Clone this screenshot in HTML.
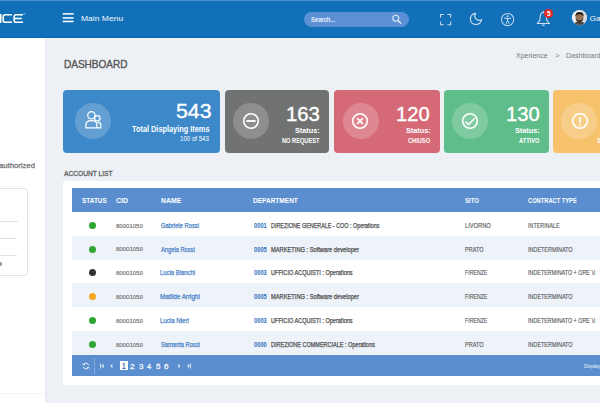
<!DOCTYPE html>
<html><head><meta charset="utf-8">
<style>
*{margin:0;padding:0;box-sizing:border-box}
html,body{width:600px;height:403px;overflow:hidden;background:#edf0f4;font-family:"Liberation Sans",sans-serif;position:relative}
.t{position:absolute;white-space:nowrap;line-height:1;transform-origin:0 0}
</style></head><body>
<div style="position:absolute;left:0;top:0;width:600px;height:38px;background:#1270b9"></div>
<div style="position:absolute;left:0;top:37px;width:600px;height:1px;background:#0b67b6"></div>
<div style="position:absolute;left:0;top:0;width:600px;height:1px;background:#4a92d2"></div>
<div style="position:absolute;left:0;top:38px;width:45px;height:365px;background:#fff"></div>
<div style="position:absolute;left:45px;top:38px;width:2px;height:365px;background:linear-gradient(90deg,#e4ebf6,#edf0f4)"></div>

<svg style="position:absolute;left:0;top:12px" width="30" height="14" viewBox="0 0 30 14">
 <rect x="0" y="2" width="1.5" height="9" fill="#fff"/>
 <path d="M12 2.8 H5.2 Q3.2 2.8 3.2 4.8 V8.2 Q3.2 10.2 5.2 10.2 H12" fill="none" stroke="#fff" stroke-width="1.6"/>
 <path d="M23 2.8 H16 Q14.2 2.8 14.2 4.6 V8.4 Q14.2 10.2 16 10.2 H23 M14.9 6.5 H21.8" fill="none" stroke="#fff" stroke-width="1.6"/>
 <circle cx="24.5" cy="1.6" r="0.8" fill="none" stroke="#cfe0f2" stroke-width="0.4"/>
</svg>
<svg style="position:absolute;left:62px;top:12px" width="13" height="11" viewBox="0 0 13 11">
 <rect x="0.7" y="1.1" width="11" height="1.5" fill="#fff"/>
 <rect x="0.7" y="5.2" width="11" height="1.5" fill="#fff"/>
 <rect x="0.7" y="8.7" width="11" height="1.5" fill="#fff"/>
</svg>

<div style="position:absolute;left:304px;top:12.3px;width:105px;height:14.5px;border-radius:8px;background:#5b90d4"></div>
<svg style="position:absolute;left:390px;top:13px" width="14" height="13" viewBox="0 0 14 13">
 <circle cx="5.8" cy="5.2" r="3.0" fill="none" stroke="#dae6f5" stroke-width="1.1"/>
 <path d="M8 7.5 L10.8 10.2" stroke="#dae6f5" stroke-width="1.5" stroke-linecap="round"/>
</svg>
<svg style="position:absolute;left:439px;top:13px" width="14" height="14" viewBox="0 0 14 14">
 <path d="M1.5 4.8 V1.5 H4.8 M8.4 1.5 H11.7 V4.8 M11.7 8.4 V11.7 H8.4 M4.8 11.7 H1.5 V8.4" fill="none" stroke="#c3d7ee" stroke-width="1.05"/>
</svg>
<svg style="position:absolute;left:469px;top:12px" width="15" height="15" viewBox="0 0 15 15">
 <path d="M6.55 1.32 A5.6 5.6 0 1 0 12.54 7.7 A4.5 4.5 0 0 1 6.55 1.32 Z" fill="none" stroke="#d3e2f3" stroke-width="1.2" stroke-linejoin="round"/>
</svg>
<svg style="position:absolute;left:500px;top:12px" width="15" height="15" viewBox="0 0 15 15">
 <circle cx="7.6" cy="7.5" r="6.1" fill="none" stroke="#c2d8ef" stroke-width="1.05"/>
 <circle cx="7.6" cy="4.3" r="0.95" fill="#d3e2f3"/>
 <path d="M4.5 6.1 L7.6 6.8 L10.7 6.1 M7.6 6.8 V8.8 L6.1 11.4 M7.6 8.8 L9.1 11.4" fill="none" stroke="#d3e2f3" stroke-width="1" stroke-linecap="round" stroke-linejoin="round"/>
</svg>
<svg style="position:absolute;left:536px;top:10px" width="16" height="17" viewBox="0 0 16 17">
 <path d="M7.3 2.4 C5.2 2.4 4.4 4.4 4.2 6.8 L3.8 10.4 L1.2 13.5 H13.4 L10.8 10.4 L10.4 6.8 C10.2 4.4 9.4 2.4 7.3 2.4 Z" fill="none" stroke="#d3e2f3" stroke-width="1.05" stroke-linejoin="round"/>
 <circle cx="7.3" cy="1.6" r="0.7" fill="#d3e2f3"/>
 <path d="M6.1 14.6 Q7.3 16 8.5 14.6" fill="none" stroke="#d3e2f3" stroke-width="1.05"/>
</svg>
<div style="position:absolute;left:544.3px;top:9.1px;width:8.7px;height:8.7px;border-radius:50%;background:#e52a2a"></div>
<svg style="position:absolute;left:571px;top:10px" width="17" height="16" viewBox="0 0 17 16">
 <defs><clipPath id="av"><circle cx="8.4" cy="7.6" r="7.5"/></clipPath></defs>
 <circle cx="8.4" cy="7.6" r="7.6" fill="#f0f0f0"/>
 <g clip-path="url(#av)">
  <rect x="11" y="0" width="6" height="16" fill="#d9d9d9"/>
  <path d="M1.5 16 Q2.5 11.8 8.4 11.4 Q14.3 11.8 15.3 16 Z" fill="#4e4a46"/>
  <ellipse cx="8.5" cy="7.4" rx="3.9" ry="4.6" fill="#9c7257"/>
  <path d="M4.4 6.8 Q4 2 8.5 2 Q13 2 12.6 6.8 Q11.8 4.2 8.5 4.3 Q5.2 4.2 4.4 6.8 Z" fill="#231d1a"/>
  <path d="M4.7 8.2 Q5 12.2 8.5 12.2 Q12 12.2 12.3 8.2 Q11.2 10.4 8.5 10.4 Q5.8 10.4 4.7 8.2Z" fill="#3a2d26"/>
 </g>
</svg>
<div style="position:absolute;left:-10px;top:188px;width:38px;height:87.5px;border:1px solid #e4e4e4;border-radius:4px"></div>
<div style="position:absolute;left:0;top:220.6px;width:18px;height:1px;background:#e2e2e2"></div>
<div style="position:absolute;left:0;top:238px;width:17px;height:1px;background:#e2e2e2"></div>
<div style="position:absolute;left:0;top:255px;width:17px;height:1px;background:#e2e2e2"></div>
<div style="position:absolute;left:0;top:392.5px;width:45px;height:1px;background:#f3f3f3"></div>
<div style="position:absolute;left:-1px;top:262px;width:3px;height:4px;border-radius:1.5px;background:#9a9a9a"></div>

<div style="position:absolute;left:63px;top:90px;width:157px;height:62.8px;border-radius:4px;background:#3d88c9"></div>
<div style="position:absolute;left:224.5px;top:90px;width:104.7px;height:62.8px;border-radius:4px;background:#717373"></div>
<div style="position:absolute;left:334px;top:90px;width:105.6px;height:62.8px;border-radius:4px;background:#d66976"></div>
<div style="position:absolute;left:443.8px;top:90px;width:104.8px;height:62.8px;border-radius:4px;background:#5fbd8a"></div>
<div style="position:absolute;left:553px;top:90px;width:105.5px;height:62.8px;border-radius:4px;background:#f6c26c"></div>
<div style="position:absolute;left:75.00px;top:103px;width:36px;height:36px;border-radius:50%;background:rgba(255,255,255,.2)"></div>
<div style="position:absolute;left:232.90px;top:103px;width:36px;height:36px;border-radius:50%;background:rgba(255,255,255,.2)"></div>
<div style="position:absolute;left:342.60px;top:103px;width:36px;height:36px;border-radius:50%;background:rgba(255,255,255,.2)"></div>
<div style="position:absolute;left:452.00px;top:103px;width:36px;height:36px;border-radius:50%;background:rgba(255,255,255,.2)"></div>
<div style="position:absolute;left:561.20px;top:103px;width:36px;height:36px;border-radius:50%;background:rgba(255,255,255,.2)"></div>
<svg style="position:absolute;left:75px;top:103px" width="36" height="36" viewBox="0 0 36 36">
 <circle cx="16.4" cy="12.2" r="3.7" fill="none" stroke="#fff" stroke-width="1.25"/>
 <path d="M10.9 24.8 V21.6 Q10.9 17.5 16.4 17.5 Q21.9 17.5 21.9 21.6 V24.8 Z" fill="none" stroke="#fff" stroke-width="1.25" stroke-linejoin="round"/>
 <circle cx="22.3" cy="15.3" r="2.7" fill="none" stroke="#fff" stroke-width="1.2"/>
 <path d="M21.9 24.8 H25.8 V22.2 Q25.8 19.3 22.6 19.2" fill="none" stroke="#fff" stroke-width="1.2" stroke-linejoin="round"/>
</svg>
<svg style="position:absolute;left:232.90px;top:103px" width="36" height="36" viewBox="0 0 36 36"><circle cx="18" cy="18" r="7.3" fill="none" stroke="#fff" stroke-width="1.6"/><path d="M13.4 18 H22.6" stroke="#fff" stroke-width="1.9"/></svg>
<svg style="position:absolute;left:342.40px;top:103px" width="36" height="36" viewBox="0 0 36 36"><circle cx="18" cy="18" r="7.3" fill="none" stroke="#fff" stroke-width="1.6"/><path d="M15.1 15.1 L20.9 20.9 M20.9 15.1 L15.1 20.9" stroke="#fff" stroke-width="1.5"/></svg>
<svg style="position:absolute;left:452.20px;top:103px" width="36" height="36" viewBox="0 0 36 36"><circle cx="18" cy="18" r="7.3" fill="none" stroke="#fff" stroke-width="1.6"/><path d="M13.9 19.2 L16.6 21.6 L22.4 15.5" fill="none" stroke="#fff" stroke-width="1.6" stroke-linecap="round" stroke-linejoin="round"/></svg>
<svg style="position:absolute;left:561.90px;top:103px" width="36" height="36" viewBox="0 0 36 36"><circle cx="18" cy="18" r="7.3" fill="none" stroke="#fff" stroke-width="1.6"/><path d="M18 13.9 V20.5" stroke="#fff" stroke-width="1.6"/><circle cx="18" cy="22.6" r="0.95" fill="#fff"/></svg>
<div style="position:absolute;left:63px;top:180.7px;width:560px;height:204.6px;border-radius:3px;background:#fff"></div>
<div style="position:absolute;left:72px;top:188px;width:540px;height:24px;background:#5a8ecf"></div>
<div style="position:absolute;left:88.7px;top:221.70px;width:7px;height:7px;border-radius:50%;background:#2ea636"></div>
<div style="position:absolute;left:72px;top:235.80px;width:540px;height:23.80px;background:#eef2f9"></div>
<div style="position:absolute;left:88.7px;top:245.50px;width:7px;height:7px;border-radius:50%;background:#2ea636"></div>
<div style="position:absolute;left:88.7px;top:269.30px;width:7px;height:7px;border-radius:50%;background:#333333"></div>
<div style="position:absolute;left:72px;top:283.40px;width:540px;height:23.80px;background:#eef2f9"></div>
<div style="position:absolute;left:88.7px;top:293.10px;width:7px;height:7px;border-radius:50%;background:#f5a623"></div>
<div style="position:absolute;left:88.7px;top:316.90px;width:7px;height:7px;border-radius:50%;background:#2ea636"></div>
<div style="position:absolute;left:72px;top:331.00px;width:540px;height:23.80px;background:#eef2f9"></div>
<div style="position:absolute;left:88.7px;top:340.70px;width:7px;height:7px;border-radius:50%;background:#2ea636"></div>
<div style="position:absolute;left:72px;top:354.8px;width:540px;height:20.8px;background:#5a8ecf"></div>
<svg style="position:absolute;left:81.6px;top:361.8px" width="8" height="8" viewBox="0 0 8 8">
 <path d="M6.6 3.2 A2.7 2.7 0 0 0 1.5 2.6 M1.4 4.8 A2.7 2.7 0 0 0 6.5 5.4" fill="none" stroke="#eaf1fa" stroke-width="1"/>
 <path d="M0.6 1.4 L1.5 3 L3.1 2.2 M7.4 6.6 L6.5 5 L4.9 5.8" fill="none" stroke="#eaf1fa" stroke-width="0.9"/>
</svg>
<div style="position:absolute;left:93.5px;top:357.5px;width:1px;height:16px;background:#84a9da"></div>
<svg style="position:absolute;left:99px;top:362px" width="100" height="8" viewBox="0 0 100 8">
 <rect x="1.2" y="1.5" width="0.9" height="5" fill="#eaf1fa"/>
 <path d="M4.6 1.8 L2.6 4 L4.6 6.2 Z" fill="#eaf1fa"/>
 <path d="M13.4 1.8 L11.4 4 L13.4 6.2 Z" fill="#eaf1fa"/>
 <path d="M79.4 1.8 L81.4 4 L79.4 6.2 Z" fill="#eaf1fa"/>
 <path d="M88.8 1.8 L90.8 4 L88.8 6.2 Z" fill="#eaf1fa"/>
 <rect x="91.2" y="1.5" width="0.9" height="5" fill="#eaf1fa"/>
</svg>
<div style="position:absolute;left:119.8px;top:361.3px;width:8.7px;height:8.7px;background:#fff"></div>
<div class="t" style="left:80.62px;top:15.00px;font-size:8.116px;font-weight:normal;color:#f4f8fc;transform:scaleX(1.050);">Main Menu</div>
<div class="t" style="left:310.90px;top:16.00px;font-size:8.116px;font-weight:normal;color:#eef4fb;transform:scaleX(0.744);-webkit-text-stroke:0.2px #eef4fb">Search...</div>
<div class="t" style="left:546.91px;top:10.00px;font-size:7.000px;font-weight:bold;color:#fff;transform:scaleX(0.914);">5</div>
<div class="t" style="left:589.80px;top:15.00px;font-size:7.971px;font-weight:normal;color:#f4f8fc;transform:scaleX(1.000);">Ga</div>
<div class="t" style="left:-0.61px;top:162.00px;font-size:8.014px;font-weight:normal;color:#6e6e6e;transform:scaleX(0.961);-webkit-text-stroke:0.25px #6e6e6e">authorized</div>
<div class="t" style="left:63.60px;top:59.00px;font-size:11.304px;font-weight:normal;color:#585858;transform:scaleX(0.886);-webkit-text-stroke:0.4px #585858">DASHBOARD</div>
<div class="t" style="left:516.09px;top:52.00px;font-size:7.260px;font-weight:normal;color:#787878;transform:scaleX(0.970);">Xperience</div>
<div class="t" style="left:555.40px;top:53.00px;font-size:7.170px;font-weight:normal;color:#888;transform:scaleX(1.110);">&gt;</div>
<div class="t" style="left:566.14px;top:52.00px;font-size:7.260px;font-weight:normal;color:#787878;transform:scaleX(0.970);">Dashboard</div>
<div class="t" style="left:175.65px;top:101.00px;font-size:20.143px;font-weight:normal;color:#fff;transform:scaleX(1.056);-webkit-text-stroke:0.35px #fff">543</div>
<div class="t" style="left:131.68px;top:126.00px;font-size:8.261px;font-weight:bold;color:#fff;transform:scaleX(0.891);">Total Displaying Items</div>
<div class="t" style="left:180.01px;top:136.00px;font-size:6.429px;font-weight:normal;color:#fff;transform:scaleX(0.954);">100 of 543</div>
<div class="t" style="left:285.97px;top:105.00px;font-size:19.429px;font-weight:normal;color:#fff;transform:scaleX(1.046);-webkit-text-stroke:0.35px #fff">163</div>
<div class="t" style="left:295.32px;top:127.00px;font-size:7.600px;font-weight:bold;color:#fff;transform:scaleX(0.955);">Status:</div>
<div class="t" style="left:281.74px;top:138.00px;font-size:6.600px;font-weight:bold;color:#fff;transform:scaleX(0.860);">NO REQUEST</div>
<div class="t" style="left:396.48px;top:105.00px;font-size:19.429px;font-weight:normal;color:#fff;transform:scaleX(1.039);-webkit-text-stroke:0.35px #fff">120</div>
<div class="t" style="left:405.82px;top:127.00px;font-size:7.600px;font-weight:bold;color:#fff;transform:scaleX(0.955);">Status:</div>
<div class="t" style="left:407.85px;top:138.00px;font-size:6.600px;font-weight:bold;color:#fff;transform:scaleX(0.860);">CHIUSO</div>
<div class="t" style="left:505.78px;top:105.00px;font-size:19.429px;font-weight:normal;color:#fff;transform:scaleX(1.039);-webkit-text-stroke:0.35px #fff">130</div>
<div class="t" style="left:515.12px;top:127.00px;font-size:7.600px;font-weight:bold;color:#fff;transform:scaleX(0.955);">Status:</div>
<div class="t" style="left:518.85px;top:138.00px;font-size:6.600px;font-weight:bold;color:#fff;transform:scaleX(0.860);">ATTIVO</div>
<div class="t" style="left:596.83px;top:138.00px;font-size:6.600px;font-weight:bold;color:#fff;transform:scaleX(0.860);">S</div>
<div class="t" style="left:63.70px;top:170.00px;font-size:7.246px;font-weight:normal;color:#606060;transform:scaleX(0.916);-webkit-text-stroke:0.3px #606060">ACCOUNT LIST</div>
<div class="t" style="left:82.41px;top:197.00px;font-size:7.536px;font-weight:bold;color:#fff;transform:scaleX(0.857);">STATUS</div>
<div class="t" style="left:115.72px;top:197.00px;font-size:7.536px;font-weight:bold;color:#fff;transform:scaleX(0.939);">CID</div>
<div class="t" style="left:160.92px;top:197.00px;font-size:7.536px;font-weight:bold;color:#fff;transform:scaleX(0.916);">NAME</div>
<div class="t" style="left:253.34px;top:197.00px;font-size:7.681px;font-weight:bold;color:#fff;transform:scaleX(0.851);">DEPARTMENT</div>
<div class="t" style="left:464.82px;top:197.00px;font-size:7.536px;font-weight:bold;color:#fff;transform:scaleX(0.794);">SITO</div>
<div class="t" style="left:527.77px;top:197.00px;font-size:7.536px;font-weight:bold;color:#fff;transform:scaleX(0.763);">CONTRACT TYPE</div>
<div class="t" style="left:115.96px;top:223.00px;font-size:6.000px;font-weight:normal;color:#707070;transform:scaleX(1.003);-webkit-text-stroke:0.15px #707070">80001050</div>
<div class="t" style="left:160.51px;top:222.00px;font-size:7.246px;font-weight:normal;color:#4580c4;transform:scaleX(0.801);-webkit-text-stroke:0.25px #4580c4">Gabriele Rossi</div>
<div class="t" style="left:253.57px;top:223.00px;font-size:6.571px;font-weight:bold;color:#2a70bb;transform:scaleX(0.874);">0001</div>
<div class="t" style="left:271.07px;top:223.00px;font-size:6.957px;font-weight:normal;color:#4e4e4e;transform:scaleX(0.779);-webkit-text-stroke:0.25px #4e4e4e">DIREZIONE GENERALE - COO : Operations</div>
<div class="t" style="left:464.64px;top:222.00px;font-size:7.246px;font-weight:normal;color:#5a5a5a;transform:scaleX(0.789);-webkit-text-stroke:0.15px #5a5a5a">LIVORNO</div>
<div class="t" style="left:527.62px;top:222.00px;font-size:7.246px;font-weight:normal;color:#5a5a5a;transform:scaleX(0.743);-webkit-text-stroke:0.15px #5a5a5a">INTERINALE</div>
<div class="t" style="left:115.96px;top:246.00px;font-size:6.000px;font-weight:normal;color:#707070;transform:scaleX(1.003);-webkit-text-stroke:0.15px #707070">80001050</div>
<div class="t" style="left:160.80px;top:246.00px;font-size:7.246px;font-weight:normal;color:#4580c4;transform:scaleX(0.792);-webkit-text-stroke:0.25px #4580c4">Angela Rossi</div>
<div class="t" style="left:253.57px;top:247.00px;font-size:6.571px;font-weight:bold;color:#2a70bb;transform:scaleX(0.874);">0005</div>
<div class="t" style="left:271.04px;top:247.00px;font-size:6.957px;font-weight:normal;color:#4e4e4e;transform:scaleX(0.823);-webkit-text-stroke:0.25px #4e4e4e">MARKETING : Software developer</div>
<div class="t" style="left:464.66px;top:246.00px;font-size:7.246px;font-weight:normal;color:#5a5a5a;transform:scaleX(0.763);-webkit-text-stroke:0.15px #5a5a5a">PRATO</div>
<div class="t" style="left:527.61px;top:246.00px;font-size:7.246px;font-weight:normal;color:#5a5a5a;transform:scaleX(0.753);-webkit-text-stroke:0.15px #5a5a5a">INDETERMINATO</div>
<div class="t" style="left:115.96px;top:270.00px;font-size:6.000px;font-weight:normal;color:#707070;transform:scaleX(1.003);-webkit-text-stroke:0.15px #707070">80001050</div>
<div class="t" style="left:160.33px;top:269.00px;font-size:7.246px;font-weight:normal;color:#4580c4;transform:scaleX(0.814);-webkit-text-stroke:0.25px #4580c4">Lucia Bianchi</div>
<div class="t" style="left:253.57px;top:270.00px;font-size:6.571px;font-weight:bold;color:#2a70bb;transform:scaleX(0.874);">0003</div>
<div class="t" style="left:271.05px;top:270.00px;font-size:6.957px;font-weight:normal;color:#4e4e4e;transform:scaleX(0.802);-webkit-text-stroke:0.25px #4e4e4e">UFFICIO ACQUISTI : Operations</div>
<div class="t" style="left:464.68px;top:269.00px;font-size:7.246px;font-weight:normal;color:#5a5a5a;transform:scaleX(0.722);-webkit-text-stroke:0.15px #5a5a5a">FIRENZE</div>
<div class="t" style="left:527.61px;top:269.00px;font-size:7.246px;font-weight:normal;color:#5a5a5a;transform:scaleX(0.745);-webkit-text-stroke:0.15px #5a5a5a">INDETERMINATO + ORE V.</div>
<div class="t" style="left:115.96px;top:294.00px;font-size:6.000px;font-weight:normal;color:#707070;transform:scaleX(1.003);-webkit-text-stroke:0.15px #707070">80001050</div>
<div class="t" style="left:160.30px;top:293.00px;font-size:7.246px;font-weight:normal;color:#4580c4;transform:scaleX(0.869);-webkit-text-stroke:0.25px #4580c4">Matilde Arrighi</div>
<div class="t" style="left:253.57px;top:294.00px;font-size:6.571px;font-weight:bold;color:#2a70bb;transform:scaleX(0.874);">0005</div>
<div class="t" style="left:271.04px;top:294.00px;font-size:6.957px;font-weight:normal;color:#4e4e4e;transform:scaleX(0.823);-webkit-text-stroke:0.25px #4e4e4e">MARKETING : Software developer</div>
<div class="t" style="left:464.68px;top:293.00px;font-size:7.246px;font-weight:normal;color:#5a5a5a;transform:scaleX(0.722);-webkit-text-stroke:0.15px #5a5a5a">FIRENZE</div>
<div class="t" style="left:527.61px;top:293.00px;font-size:7.246px;font-weight:normal;color:#5a5a5a;transform:scaleX(0.753);-webkit-text-stroke:0.15px #5a5a5a">INDETERMINATO</div>
<div class="t" style="left:115.96px;top:318.00px;font-size:6.000px;font-weight:normal;color:#707070;transform:scaleX(1.003);-webkit-text-stroke:0.15px #707070">80001050</div>
<div class="t" style="left:160.31px;top:317.00px;font-size:7.246px;font-weight:normal;color:#4580c4;transform:scaleX(0.844);-webkit-text-stroke:0.25px #4580c4">Lucia Nieri</div>
<div class="t" style="left:253.57px;top:318.00px;font-size:6.571px;font-weight:bold;color:#2a70bb;transform:scaleX(0.874);">0003</div>
<div class="t" style="left:271.05px;top:318.00px;font-size:6.957px;font-weight:normal;color:#4e4e4e;transform:scaleX(0.802);-webkit-text-stroke:0.25px #4e4e4e">UFFICIO ACQUISTI : Operations</div>
<div class="t" style="left:464.68px;top:317.00px;font-size:7.246px;font-weight:normal;color:#5a5a5a;transform:scaleX(0.722);-webkit-text-stroke:0.15px #5a5a5a">FIRENZE</div>
<div class="t" style="left:527.61px;top:317.00px;font-size:7.246px;font-weight:normal;color:#5a5a5a;transform:scaleX(0.745);-webkit-text-stroke:0.15px #5a5a5a">INDETERMINATO + ORE V.</div>
<div class="t" style="left:115.96px;top:342.00px;font-size:6.000px;font-weight:normal;color:#707070;transform:scaleX(1.003);-webkit-text-stroke:0.15px #707070">80001050</div>
<div class="t" style="left:160.51px;top:341.00px;font-size:7.246px;font-weight:normal;color:#4580c4;transform:scaleX(0.792);-webkit-text-stroke:0.25px #4580c4">Samanta Rossi</div>
<div class="t" style="left:253.57px;top:342.00px;font-size:6.571px;font-weight:bold;color:#2a70bb;transform:scaleX(0.874);">0000</div>
<div class="t" style="left:271.06px;top:342.00px;font-size:6.957px;font-weight:normal;color:#4e4e4e;transform:scaleX(0.793);-webkit-text-stroke:0.25px #4e4e4e">DIREZIONE COMMERCIALE : Operations</div>
<div class="t" style="left:464.66px;top:341.00px;font-size:7.246px;font-weight:normal;color:#5a5a5a;transform:scaleX(0.763);-webkit-text-stroke:0.15px #5a5a5a">PRATO</div>
<div class="t" style="left:527.61px;top:341.00px;font-size:7.246px;font-weight:normal;color:#5a5a5a;transform:scaleX(0.753);-webkit-text-stroke:0.15px #5a5a5a">INDETERMINATO</div>
<div class="t" style="left:122.10px;top:363.00px;font-size:8.143px;font-weight:bold;color:#3f73b8;transform:scaleX(0.810);">1</div>
<div class="t" style="left:130.29px;top:363.00px;font-size:7.714px;font-weight:normal;color:#eef3fb;transform:scaleX(1.071);-webkit-text-stroke:0.3px #eef3fb">2</div>
<div class="t" style="left:138.58px;top:363.00px;font-size:7.714px;font-weight:normal;color:#eef3fb;transform:scaleX(1.048);-webkit-text-stroke:0.3px #eef3fb">3</div>
<div class="t" style="left:147.45px;top:363.00px;font-size:7.714px;font-weight:normal;color:#eef3fb;transform:scaleX(0.966);-webkit-text-stroke:0.3px #eef3fb">4</div>
<div class="t" style="left:155.88px;top:363.00px;font-size:7.714px;font-weight:normal;color:#eef3fb;transform:scaleX(1.048);-webkit-text-stroke:0.3px #eef3fb">5</div>
<div class="t" style="left:164.49px;top:363.00px;font-size:7.714px;font-weight:normal;color:#eef3fb;transform:scaleX(1.071);-webkit-text-stroke:0.3px #eef3fb">6</div>
<div class="t" style="left:583.61px;top:363.00px;font-size:6.200px;font-weight:normal;color:#eef3fb;transform:scaleX(0.780);">Displaying</div>
</body></html>
